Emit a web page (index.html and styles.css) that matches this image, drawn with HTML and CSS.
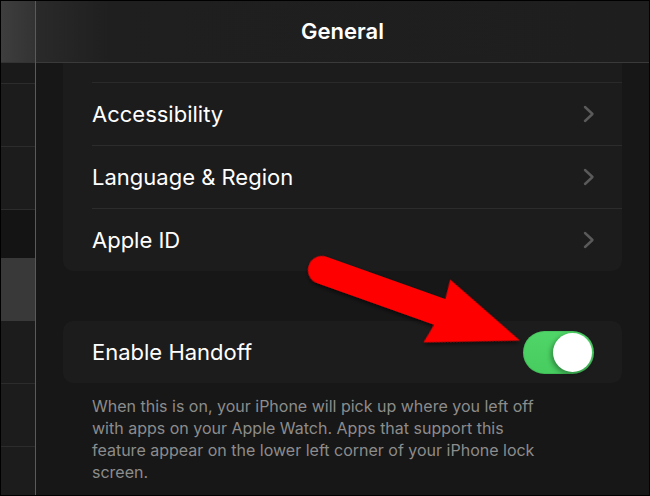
FILE: index.html
```html
<!DOCTYPE html>
<html lang="en">
<head>
<meta charset="utf-8">
<title>General</title>
<link rel="stylesheet" href="styles.css">
</head>
<body>
<div class="frame">
  <aside class="strip">
    <div class="strip-head"></div>
    <div class="strip-row first"></div>
    <div class="strip-row"></div>
    <div class="strip-row"></div>
    <div class="strip-row dark"></div>
    <div class="strip-row selected"></div>
    <div class="strip-row"></div>
    <div class="strip-row"></div>
    <div class="strip-row last"></div>
  </aside>
  <main class="main">
    <header class="header"><h1 class="title">General</h1></header>
    <section class="card top-card">
      <div class="card-lead"></div>
      <div class="row"><span class="label">Accessibility</span><svg class="chev" viewBox="0 0 12 18" width="12" height="18"><path d="M2 2 L9.5 9 L2 16" fill="none" stroke="#5a5a5a" stroke-width="2.4" stroke-linecap="round" stroke-linejoin="round"/></svg></div>
      <div class="row"><span class="label">Language &amp; Region</span><svg class="chev" viewBox="0 0 12 18" width="12" height="18"><path d="M2 2 L9.5 9 L2 16" fill="none" stroke="#5a5a5a" stroke-width="2.4" stroke-linecap="round" stroke-linejoin="round"/></svg></div>
      <div class="row last"><span class="label">Apple ID</span><svg class="chev" viewBox="0 0 12 18" width="12" height="18"><path d="M2 2 L9.5 9 L2 16" fill="none" stroke="#5a5a5a" stroke-width="2.4" stroke-linecap="round" stroke-linejoin="round"/></svg></div>
    </section>
    <section class="card handoff-card">
      <div class="row last"><span class="label">Enable Handoff</span><span class="toggle"><span class="knob"></span></span></div>
    </section>
    <p class="note">When this is on, your iPhone will pick up where you left off with apps on your Apple Watch. Apps that support this feature appear on the lower left corner of your iPhone lock screen.</p>
    <svg class="arrow" width="650" height="496" viewBox="0 0 650 496">
      <defs>
        <filter id="sh" x="-20%" y="-20%" width="140%" height="140%">
          <feDropShadow dx="1" dy="2" stdDeviation="2" flood-color="#000" flood-opacity="0.6"/>
        </filter>
      </defs>
      <g transform="translate(322 270) rotate(19.6)" filter="url(#sh)">
        <path d="M0 -14 L126 -14 L124 -34 L210 0 L120 34 L124 14 L0 14 A14 14 0 0 1 0 -14 Z" fill="#ff0000"/>
      </g>
    </svg>
  </main>
</div>
</body>
</html>
```
FILE: styles.css
```css
* { box-sizing: border-box; }
html, body { margin: 0; padding: 0; background: #000; }
body { width: 650px; height: 496px; overflow: hidden; font-family: Inter, "Noto Sans", "Liberation Sans", sans-serif; }
.frame {
  margin: 1px;
  width: 648px;
  height: 494px;
  display: flex;
  background: #171717;
  overflow: hidden;
}
.strip {
  width: 35px;
  flex: none;
  border-right: 1px solid #5a5a5a;
  display: flex;
  flex-direction: column;
}
.strip-head {
  height: 61px;
  background: linear-gradient(90deg, #3e3e3e 0%, #333 100%);
}
.strip-row {
  height: 63px;
  background: #1c1c1c;
  border-bottom: 1px solid #2c2c2c;
}
.strip-row.first { background: #1a1a1a; border-top: 1px solid #333; height: 22px; }
.strip-row.dark { height: 48px; background: #141414; border-bottom: none; }
.strip-row.selected { height: 63px; background: #393939; border-bottom: none; }
.strip-row.last { flex: 1; border-bottom: none; }

.main {
  flex: 1;
  position: relative;
  display: flex;
  flex-direction: column;
}
.header {
  height: 62px;
  flex: none;
  border-bottom: 1px solid #3a3a3a;
  background: linear-gradient(90deg, #2a2a2a 0%, #1f1f1f 12%, #1e1e1e 100%);
  display: flex;
  align-items: center;
  justify-content: center;
}
.title {
  margin: 0;
  color: #fff;
  font-size: 22px;
  font-weight: 600;
  letter-spacing: 0;
  padding-bottom: 1px;
}
.card {
  margin: 0 27px 0 27px;
  background: #1c1c1c;
  border-radius: 10px;
}
.top-card { border-top-left-radius: 0; border-top-right-radius: 0; }
.card-lead {
  height: 20px;
  margin-left: 29px;
  border-bottom: 1px solid #2a2a2a;
}
.row {
  height: 63px;
  margin-left: 29px;
  padding-right: 28px;
  display: flex;
  align-items: center;
  justify-content: space-between;
  border-bottom: 1px solid #2c2c2c;
}
.row.last { height: 62px; border-bottom: none; }
.label {
  color: #fff;
  font-size: 22px;
  letter-spacing: 0;
}
.chev { display: block; margin-right: -1px; }
.handoff-card { margin-top: 50px; }
.handoff-card .row { padding-right: 28px; }
.toggle {
  width: 71px;
  height: 43px;
  border-radius: 22px;
  background: linear-gradient(180deg, #50d668 0%, #46cc5f 100%);
  display: flex;
  align-items: center;
  justify-content: flex-end;
  padding-right: 2px;
  box-shadow: inset 0 0 0 1px rgba(0,0,0,0.08);
}
.knob {
  width: 39px;
  height: 39px;
  border-radius: 50%;
  background: #fff;
  box-shadow: -2px 2px 5px rgba(0,0,0,0.35);
}
.note {
  margin: 12px 100px 0 56px;
  color: #8c8c8c;
  font-size: 16px;
  line-height: 22px;
}
.arrow {
  position: absolute;
  left: -36px;
  top: -1px;
  pointer-events: none;
}
```
